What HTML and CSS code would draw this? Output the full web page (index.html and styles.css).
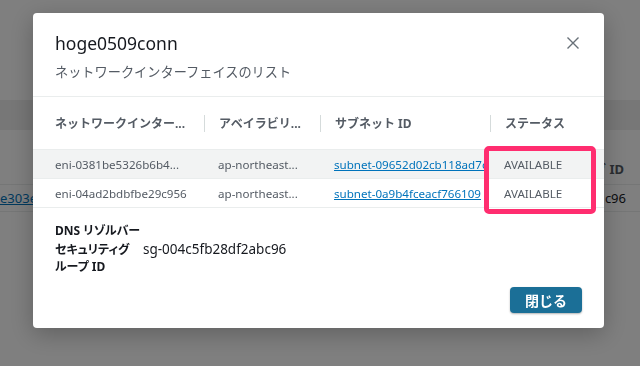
FILE: index.html
```html
<!DOCTYPE html>
<html lang="ja">
<head>
    <meta charset="UTF-8">
    <meta name="viewport" content="width=device-width, initial-scale=1.0">
    <title>Client VPN endpoint</title>
    <link rel="stylesheet" href="styles.css">
</head>
<body>
    <div class="page">
        <div class="page-band"></div>
        <div class="page-table">
            <div class="page-head">
                <span></span>
                <span class="page-th">グ ID</span>
            </div>
            <div class="page-row">
                <a class="page-link" href="#">e303e</a>
                <span class="page-val">c96</span>
            </div>
        </div>
    </div>

    <div class="overlay">
        <div class="modal">
            <div class="modal-header">
                <div class="modal-titles">
                    <h2 class="modal-title">hoge0509conn</h2>
                    <p class="modal-desc">ネットワークインターフェイスのリスト</p>
                </div>
                <button type="button" class="close-btn" aria-label="閉じる">
                    <svg width="14" height="14" viewBox="0 0 14 14">
                        <path d="M1.5 1.5 L12.5 12.5 M12.5 1.5 L1.5 12.5" stroke="#687078" stroke-width="1.4" fill="none"/>
                    </svg>
                </button>
            </div>

            <div class="eni-table">
                <div class="eni-row eni-head">
                    <div class="cell">ネットワークインター...</div>
                    <div class="cell sep">アベイラビリ...</div>
                    <div class="cell sep">サブネット ID</div>
                    <div class="cell sep">ステータス</div>
                </div>
                <div class="eni-row selected">
                    <div class="cell">eni-0381be5326b6b4...</div>
                    <div class="cell">ap-northeast...</div>
                    <div class="cell"><a href="#">subnet-09652d02cb118ad7c</a></div>
                    <div class="cell">AVAILABLE</div>
                </div>
                <div class="eni-row">
                    <div class="cell">eni-04ad2bdbfbe29c956</div>
                    <div class="cell">ap-northeast...</div>
                    <div class="cell"><a href="#">subnet-0a9b4fceacf766109</a></div>
                    <div class="cell">AVAILABLE</div>
                </div>
                <div class="highlight"></div>
            </div>

            <div class="details">
                <div class="detail-row">
                    <div class="detail-label nowrap">DNS リゾルバー</div>
                    <div class="detail-value"></div>
                </div>
                <div class="detail-row">
                    <div class="detail-label">セキュリティグループ ID</div>
                    <div class="detail-value">sg-004c5fb28df2abc96</div>
                </div>
            </div>

            <div class="modal-footer">
                <button type="button" class="primary-btn">閉じる</button>
            </div>
        </div>
    </div>
</body>
</html>
```

FILE: styles.css
```css
body {
    margin: 0;
    padding: 0;
    font-family: "Noto Sans", "Noto Sans CJK JP", sans-serif;
    background-color: #ffffff;
    color: #16191f;
    width: 640px;
    height: 366px;
    overflow: hidden;
}

.page {
    padding-top: 100px;
}

.page-band {
    height: 30px;
    background: #eeeeee;
}

.page-table {
    margin-top: 22px;
}

.page-head,
.page-row {
    display: flex;
    justify-content: space-between;
    border-bottom: 1px solid #eaeded;
    font-size: 13px;
}

.page-head {
    height: 32px;
    align-items: center;
    font-weight: bold;
    color: #545b64;
}

.page-th {
    padding-right: 16px;
}

.page-row {
    height: 26px;
    align-items: center;
    color: #16191f;
}

.page-val {
    padding-right: 14px;
}

.page-link {
    color: #0073bb;
}

.overlay {
    position: fixed;
    inset: 0;
    background: rgba(0, 0, 0, 0.5);
}

.modal {
    position: absolute;
    left: 33px;
    top: 13px;
    width: 571px;
    height: 315px;
    background: white;
    border-radius: 4px;
    box-shadow: 0 6px 24px rgba(0, 0, 0, 0.25);
    display: flex;
    flex-direction: column;
    overflow: hidden;
}

.modal-header {
    display: flex;
    justify-content: space-between;
    padding: 19px 22px 14px 22px;
    border-bottom: 1px solid #eaeded;
}

.modal-title {
    margin: 0;
    font-size: 17.5px;
    line-height: 22px;
    font-weight: normal;
    color: #16191f;
}

.modal-desc {
    margin: 8px 0 0 0;
    font-size: 13.2px;
    line-height: 20px;
    color: #545b64;
}

.close-btn {
    background: none;
    border: none;
    padding: 0;
    width: 14px;
    height: 14px;
    margin-top: 4px;
    margin-right: 2px;
    cursor: pointer;
}

.eni-table {
    position: relative;
}

.eni-row {
    display: grid;
    grid-template-columns: 171px 116px 170px 114px;
    height: 28px;
    align-items: center;
    border-bottom: 1px solid #eaeded;
    font-size: 11.6px;
    color: #545b64;
}

.eni-head {
    height: 52px;
    font-size: 12px;
    font-weight: bold;
    color: #545b64;
}

.selected {
    background: #f2f3f3;
}

.cell {
    padding-left: 14px;
    white-space: nowrap;
    line-height: 17px;
}

.cell:first-child {
    padding-left: 22px;
}

.eni-head .sep {
    border-left: 1px solid #d5dbdb;
}

.cell a {
    color: #0073bb;
}

.highlight {
    position: absolute;
    left: 451px;
    top: 49px;
    width: 102px;
    height: 58px;
    border: 5px solid #ff2d6f;
    border-radius: 5px;
}

.details {
    padding: 14px 22px 0 22px;
    font-size: 12px;
}

.detail-row {
    display: flex;
    gap: 8px;
    line-height: 17px;
    margin-bottom: 2px;
}

.detail-label {
    width: 80px;
    flex-shrink: 0;
    font-weight: bold;
    color: #16191f;
    font-feature-settings: "palt";
}

.nowrap {
    white-space: nowrap;
}

.detail-value {
    font-size: 13.5px;
    color: #16191f;
}

.modal-footer {
    margin-top: auto;
    display: flex;
    justify-content: flex-end;
    padding: 0 22px 15px 22px;
}

.primary-btn {
    width: 72px;
    height: 26px;
    background: #1b6f97;
    color: white;
    border: none;
    border-radius: 4px;
    font-family: inherit;
    font-size: 14px;
    font-weight: bold;
    box-shadow: 0 1px 2px rgba(0, 0, 0, 0.3);
    cursor: pointer;
}
```
